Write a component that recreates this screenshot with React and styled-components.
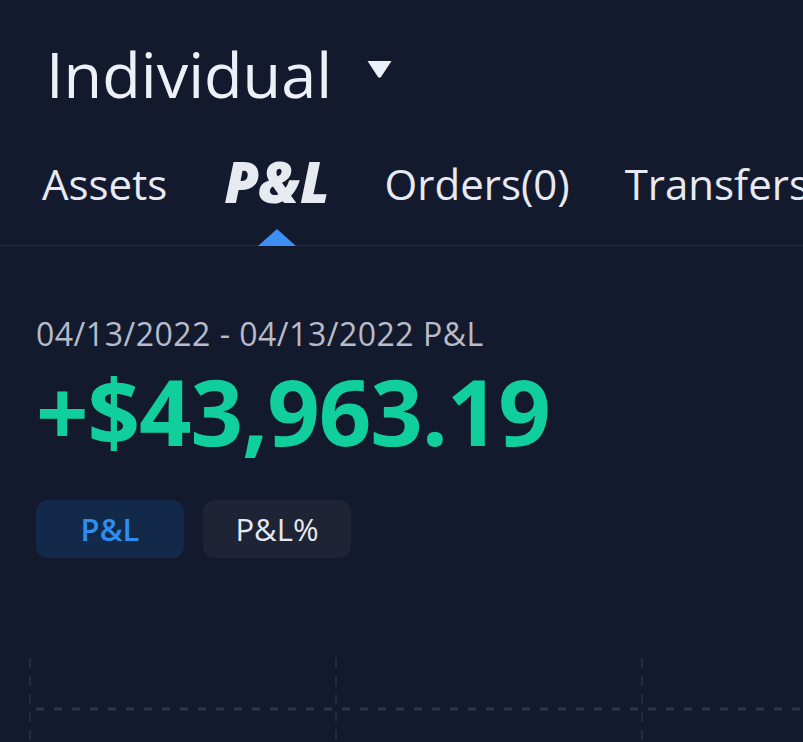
import styled, { createGlobalStyle } from "styled-components";

const Global = createGlobalStyle`
  html, body {
    margin: 0;
    padding: 0;
    background: #141a2e;
  }
  body {
    font-family: "Open Sans", "Noto Sans", sans-serif;
    color: #eef0f7;
    overflow: hidden;
  }
`;

const Page = styled.div`
  width: 803px;
  height: 742px;
  background: #141a2e;
  overflow: hidden;
`;

const Header = styled.div`
  display: flex;
  align-items: center;
  gap: 34px;
  padding: 32px 0 0 46px;
  height: 84px;
`;

const AccountName = styled.h1`
  margin: 0;
  font-size: 63px;
  font-weight: 500;
  line-height: 84px;
  color: #eef0f7;
`;

const Caret = styled.svg`
  width: 27px;
  height: 20px;
  margin-top: -10px;
`;

const Tabs = styled.div`
  display: flex;
  align-items: flex-end;
  gap: 55px;
  padding: 0 0 40px 42px;
  height: 130px;
  box-sizing: border-box;
  border-bottom: 1px solid #252c40;
  white-space: nowrap;
`;

const Tab = styled.div`
  position: relative;
  font-size: ${(p) => (p.$active ? "56px" : "42px")};
  line-height: 1;
  color: #e8eaf2;
  font-weight: ${(p) => (p.$active ? 800 : 400)};
  font-style: ${(p) => (p.$active ? "italic" : "normal")};
  ${(p) => p.$active && "margin-bottom: -4px; margin-left: 2px;"}
`;

const Pointer = styled.span`
  position: absolute;
  left: 50%;
  bottom: -37px;
  transform: translateX(-50%);
  width: 0;
  height: 0;
  border-left: 19px solid transparent;
  border-right: 19px solid transparent;
  border-bottom: 17px solid #3d8ef5;
`;

const Summary = styled.div`
  padding: 70px 0 0 36px;
`;

const Period = styled.div`
  font-size: 32px;
  line-height: 36px;
  letter-spacing: 0.5px;
  color: #b7bbca;
`;

const Amount = styled.div`
  font-size: 92px;
  font-weight: 700;
  line-height: 96px;
  color: #10cf9c;
  letter-spacing: -1.1px;
  margin-top: 11px;
`;

const Toggles = styled.div`
  display: flex;
  gap: 19px;
  margin-top: 41px;
`;

const Toggle = styled.div`
  width: 148px;
  height: 58px;
  border-radius: 12px;
  display: flex;
  align-items: center;
  justify-content: center;
  font-size: 31px;
  font-weight: ${(p) => (p.$active ? 600 : 500)};
  background: ${(p) => (p.$active ? "#12294a" : "#1e2436")};
  color: ${(p) => (p.$active ? "#2b8ff2" : "#e6e8ef")};
`;

const Chart = styled.svg`
  display: block;
  margin-top: 100px;
`;

export default function App() {
  return (
    <Page>
      <Global />
      <Header>
        <AccountName>Individual</AccountName>
        <Caret viewBox="0 0 27 20">
          <path d="M1.5 2 H25.5 L15 18 Q13.5 19.5 12 18 Z" fill="#eef0f7" />
        </Caret>
      </Header>
      <Tabs>
        <Tab>Assets</Tab>
        <Tab $active>
          P&amp;L
          <Pointer />
        </Tab>
        <Tab>Orders(0)</Tab>
        <Tab>Transfers</Tab>
      </Tabs>
      <Summary>
        <Period>04/13/2022 - 04/13/2022 P&amp;L</Period>
        <Amount>+$43,963.19</Amount>
        <Toggles>
          <Toggle $active>P&amp;L</Toggle>
          <Toggle>P&amp;L%</Toggle>
        </Toggles>
      </Summary>
      <Chart width="803" height="86" viewBox="0 0 803 86">
        {[30, 336, 642].map((x) => (
          <line
            key={x}
            x1={x}
            y1="0"
            x2={x}
            y2="86"
            stroke="#2a3145"
            strokeWidth="1.5"
            strokeDasharray="10 8"
          />
        ))}
        <line
          x1="36"
          y1="51"
          x2="803"
          y2="51"
          stroke="#2c3448"
          strokeWidth="3"
          strokeDasharray="8 10"
        />
      </Chart>
    </Page>
  );
}
